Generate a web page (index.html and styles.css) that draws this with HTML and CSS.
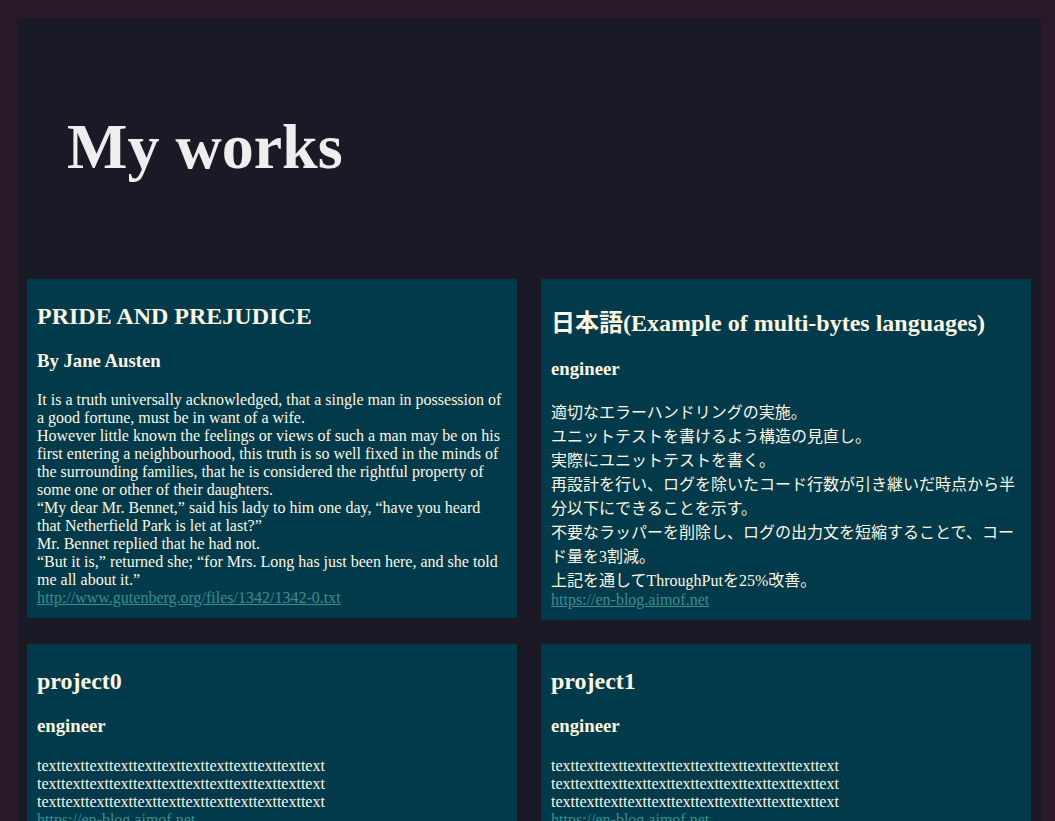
FILE: index.html
```html
<!DOCTYPE html>
<html lang="en">
<head>
<meta charset="utf-8">
<title>My works</title>
<link rel="stylesheet" href="styles.css">
</head>
<body>
<div class="page">
  <header class="hero">
    <h1 class="hero-title">My works</h1>
  </header>
  <main class="works">
    <article class="card">
      <h2 class="card-title">PRIDE AND PREJUDICE</h2>
      <h3 class="card-sub">By Jane Austen</h3>
      <p class="card-body">It is a truth universally acknowledged, that a single man in possession of a good fortune, must be in want of a wife.<br>However little known the feelings or views of such a man may be on his first entering a neighbourhood, this truth is so well fixed in the minds of the surrounding families, that he is considered the rightful property of some one or other of their daughters.<br>“My dear Mr. Bennet,” said his lady to him one day, “have you heard that Netherfield Park is let at last?”<br>Mr. Bennet replied that he had not.<br>“But it is,” returned she; “for Mrs. Long has just been here, and she told me all about it.”<br><a class="card-link" href="#">http://www.gutenberg.org/files/1342/1342-0.txt</a></p>
    </article>
    <article class="card">
      <h2 class="card-title">日本語(Example of multi-bytes languages)</h2>
      <h3 class="card-sub">engineer</h3>
      <p class="card-body">適切なエラーハンドリングの実施。<br>ユニットテストを書けるよう構造の見直し。<br>実際にユニットテストを書く。<br>再設計を行い、ログを除いたコード行数が引き継いだ時点から半分以下にできることを示す。<br>不要なラッパーを削除し、ログの出力文を短縮することで、コード量を3割減。<br>上記を通してThroughPutを25%改善。<br><a class="card-link" href="#">https://en-blog.aimof.net</a></p>
    </article>
    <article class="card">
      <h2 class="card-title">project0</h2>
      <h3 class="card-sub">engineer</h3>
      <p class="card-body">texttexttexttexttexttexttexttexttexttexttexttext<br>texttexttexttexttexttexttexttexttexttexttexttext<br>texttexttexttexttexttexttexttexttexttexttexttext<br><a class="card-link" href="#">https://en-blog.aimof.net</a></p>
    </article>
    <article class="card">
      <h2 class="card-title">project1</h2>
      <h3 class="card-sub">engineer</h3>
      <p class="card-body">texttexttexttexttexttexttexttexttexttexttexttext<br>texttexttexttexttexttexttexttexttexttexttexttext<br>texttexttexttexttexttexttexttexttexttexttexttext<br><a class="card-link" href="#">https://en-blog.aimof.net</a></p>
    </article>
  </main>
</div>
</body>
</html>
```

FILE: styles.css
```css
html, body {
  margin: 0;
  padding: 0;
}

body {
  background: #2a1a29;
  font-family: "Liberation Serif", "Noto Sans CJK JP", serif;
  font-size: 16px;
  color: #fdf6e3;
  padding: 18px 14px 0 17px;
  overflow: hidden;
}

.page {
  background: #191a25;
  width: 1024px;
  min-height: 900px;
}

.hero {
  padding: 49px 50px 52px;
}

.hero-title {
  margin: 0.67em 0;
  font-size: 64px;
  font-weight: bold;
  color: #eeeeee;
}

.works {
  display: grid;
  grid-template-columns: 1fr 1fr;
  gap: 24px;
  padding: 0 10px;
  align-items: start;
}

.card {
  background: #013a4a;
  padding: 4px 10px 11px;
}

.card-title {
  font-size: 24px;
  margin: 0.83em 0;
}

.card-sub {
  font-size: 18.72px;
  margin: 1em 0 19.72px;
}

.card-body {
  margin: 0;
}

.card-link {
  color: #3a8e8d;
}
```
